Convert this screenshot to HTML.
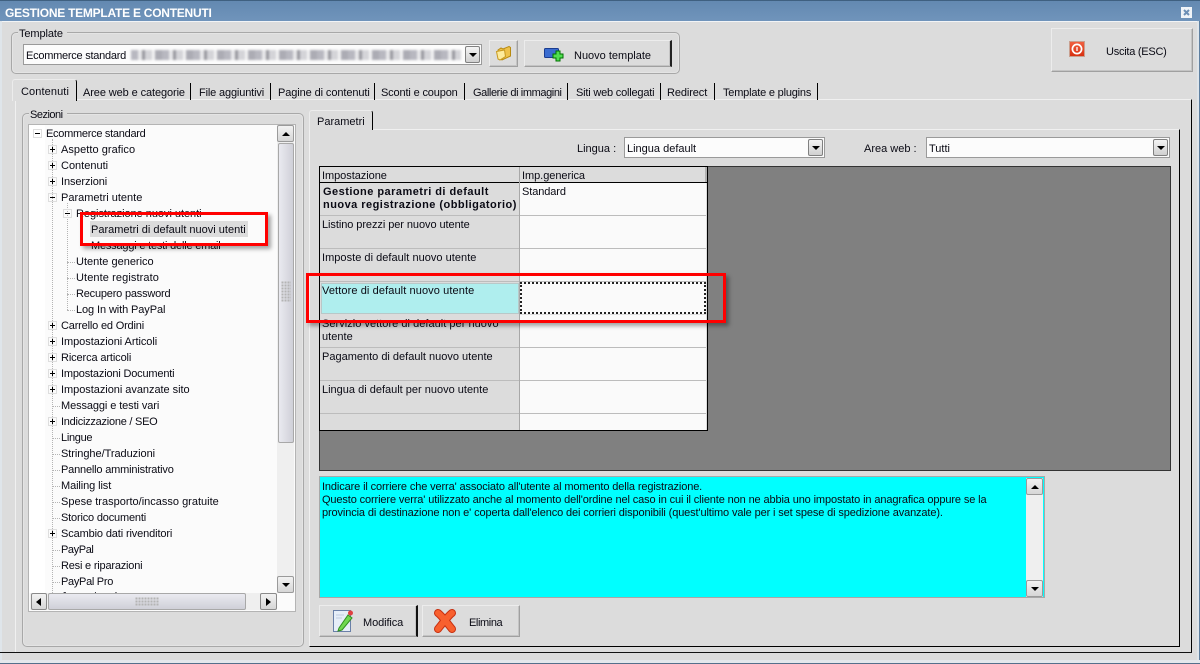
<!DOCTYPE html>
<html><head><meta charset="utf-8"><style>
html,body{margin:0;padding:0}
body{width:1200px;height:664px;overflow:hidden;position:relative;background:#dcdcdc;font:11px/14px "Liberation Sans",sans-serif;color:#0a0a14}
div,span.t,svg{position:absolute;box-sizing:border-box}
.t{white-space:nowrap;margin-top:1px}
.grp{border:1px solid #a8a8a8;border-radius:5px;box-shadow:inset 0 0 0 1px #e4e4e4}
.lab{background:#dcdcdc;padding:0 4px 0 1px}
.combo{background:#fcfcfc;border:1px solid #9a9a9a;height:21px}
.arr{right:1px;top:1px;width:15px;height:17px;background:linear-gradient(#f4f4f4,#d0d0d0);border:1px solid #808080;border-radius:2px}
.arr:after,.up:after,.dn:after{content:"";position:absolute;left:3px;top:6px;border:4px solid transparent;border-top:4px solid #000;border-bottom:0}
.up,.dn{width:17px;height:17px;background:linear-gradient(#f2f2f2,#d6d6d6);border:1px solid #9a9a9a;border-radius:2px}
.up:after{border-top:0;border-bottom:4px solid #000}
.up:after,.dn:after{left:4px}
.btn{background:#dcdcdc;border:1px solid;border-color:#ececec #a0a0a0 #a0a0a0 #ececec;box-shadow:inset -1px -1px 0 #c4c4c4}
.tsep{width:1px;background:#000;top:83px;height:17px}
.exp{width:9px;height:9px;left:0;top:0;border:1px solid #dedede}
.exp:before{content:"";position:absolute;left:1px;top:3px;width:5px;height:1px;background:#000}
.exp.p:after{content:"";position:absolute;left:3px;top:1px;width:1px;height:5px;background:#000}
.dv{border-left:1px dotted #b4b4b4}
.dh{border-top:1px dotted #b4b4b4;height:1px}
.rowl{left:320px;width:199px;background:#dcdcdc;border-bottom:1px solid #bcbcbc}
.rowr{left:520px;width:186px;background:#fafafa;border-bottom:1px solid #bcbcbc}
.red{border:3px solid #f00;box-shadow:3px 3px 4px rgba(0,0,0,.35)}
.grip{background-image:radial-gradient(#b4b4b4 50%,transparent 55%);background-size:3px 3px}
</style></head><body>
<!-- window frame -->
<div style="left:0;top:0;width:1200px;height:21px;background:linear-gradient(#6389b1,#7094bb);border-top:1px solid #3f6080"></div>
<div style="left:0;top:21px;width:1200px;height:1px;background:#f2f4f6"></div>
<div style="left:0;top:21px;width:2px;height:643px;background:#dfe5ea"></div>
<div style="left:1197px;top:21px;width:3px;height:643px;background:#dfe5ea;border-right:1px solid #5f7f9f"></div>
<div style="left:0;top:660px;width:1200px;height:4px;background:#e4e8ec;border-bottom:1px solid #54708c"></div>
<span class="t" style="left:5px;top:5px;color:#fff;font-weight:bold;font-size:12px;letter-spacing:-.25px">GESTIONE TEMPLATE E CONTENUTI</span>
<svg style="left:1181px;top:7px" width="11" height="11"><rect x="0" y="0" width="11" height="11" fill="#f0f4f8"/><path d="M3 3L8 8M8 3L3 8" stroke="#6d90b6" stroke-width="2"/></svg>

<!-- Template group -->
<div class="grp" style="left:11px;top:32px;width:669px;height:42px"></div>
<span class="t lab" style="left:18px;top:26px;letter-spacing:-.1px">Template</span>
<div class="combo" style="left:23px;top:44px;width:459px"><div class="arr"></div></div>
<span class="t" style="left:26px;top:48px;letter-spacing:-.25px">Ecommerce standard</span>
<div style="left:131px;top:50px;width:330px;height:10px;filter:blur(1px);background:repeating-linear-gradient(90deg,#b8b8c0 0 7px,#e8e8ea 7px 11px,#98989f 11px 14px,#d4d4d8 14px 21px,#f4f4f4 21px 24px,#acacb4 24px 31px)"></div>
<div class="btn" style="left:489px;top:40px;width:29px;height:27px"></div>
<svg style="left:495px;top:45px" width="17" height="17"><path d="M3 5L6 3L8 4L14 1.5L15.5 2.5L15.5 11L7 15L3 13Z" fill="#eec24a" stroke="#b88a10"/><path d="M1.5 6.5L9.5 5L10.5 11.5L5 15L3 14Z" fill="#fdeb9c" stroke="#c89a20"/></svg>
<div class="btn" style="left:524px;top:40px;width:148px;height:27px;border-right:2px solid #222"></div>
<svg style="left:544px;top:47px" width="20" height="17"><rect x="0.5" y="1.5" width="14" height="9" rx="1" fill="#3a6cd0" stroke="#1a3c90"/><path d="M9 7h3V4h4v3h3v4h-3v3h-4v-3H9z" fill="#50e050" stroke="#007000"/></svg>
<span class="t" style="left:574px;top:48px">Nuovo template</span>
<div class="btn" style="left:1051px;top:28px;width:142px;height:44px"></div>
<div style="left:1069px;top:41px;width:16px;height:16px;background:linear-gradient(#f06040,#d83010);border:1px solid #c8a090"></div>
<svg style="left:1069px;top:41px" width="16" height="16"><circle cx="8" cy="8" r="4.6" fill="none" stroke="#fff" stroke-width="1.7"/><path d="M8 6V10" stroke="#fff" stroke-width="1.3"/></svg>
<span class="t" style="left:1106px;top:44px;letter-spacing:-.25px">Uscita (ESC)</span>

<!-- Outer tabs -->
<div style="left:15px;top:99px;width:1177px;height:554px;border-top:1px solid #f0f0f0;border-left:1px solid #f0f0f0;border-right:1px solid #000;border-bottom:1px solid #000"></div>
<div style="left:0;top:652px;width:1192px;height:1px;background:#111"></div>
<div style="left:12px;top:79px;width:65px;height:22px;background:#dcdcdc;border:1px solid #ececec;border-bottom:0;border-radius:3px 3px 0 0;border-right:1px solid #000"></div>
<span class="t" style="left:21px;top:84px;letter-spacing:.1px">Contenuti</span>
<span class="t" style="left:83px;top:85px;letter-spacing:-.1px">Aree web e categorie</span>
<span class="t" style="left:199px;top:85px;letter-spacing:-.15px">File aggiuntivi</span>
<span class="t" style="left:278px;top:85px;letter-spacing:-.1px">Pagine di contenuti</span>
<span class="t" style="left:381px;top:85px;letter-spacing:-.15px">Sconti e coupon</span>
<span class="t" style="left:473px;top:85px;letter-spacing:-.4px">Gallerie di immagini</span>
<span class="t" style="left:576px;top:85px;letter-spacing:-.2px">Siti web collegati</span>
<span class="t" style="left:667px;top:85px;letter-spacing:-.1px">Redirect</span>
<span class="t" style="left:723px;top:85px;letter-spacing:-.2px">Template e plugins</span>
<div class="tsep" style="left:190px"></div><div class="tsep" style="left:270px"></div><div class="tsep" style="left:374px"></div><div class="tsep" style="left:464px"></div><div class="tsep" style="left:567px"></div><div class="tsep" style="left:660px"></div><div class="tsep" style="left:714px"></div><div class="tsep" style="left:817px"></div>

<!-- Sezioni -->
<div class="grp" style="left:22px;top:113px;width:282px;height:534px"></div>
<span class="t lab" style="left:29px;top:107px;letter-spacing:-.5px">Sezioni</span>
<div style="left:28px;top:124px;width:268px;height:488px;background:#fbfbfb;border:1px solid #b4b4b4;overflow:hidden"></div>
<div style="left:29px;top:125px;width:16px;height:468px;background:#fff"></div>
<div style="left:61px;top:592px;width:80px;height:2px;overflow:hidden"><span class="t" style="left:0;top:-3px;margin:0">Acquisti online</span></div>
<div style="left:277px;top:125px;width:17px;height:468px;background:#efefef"></div>
<div class="up" style="left:277px;top:125px"></div>
<div style="left:278px;top:143px;width:16px;height:300px;background:linear-gradient(90deg,#eaeaf0,#cfd0d8);border:1px solid #a8a8a8;border-radius:2px"></div>
<div class="grip" style="left:281px;top:281px;width:10px;height:21px"></div>
<div class="dn" style="left:277px;top:576px"></div>
<div style="left:30px;top:593px;width:246px;height:17px;background:#efefef"></div>
<div style="left:31px;top:593px;width:16px;height:17px;background:linear-gradient(#f2f2f2,#d6d6d6);border:1px solid #8a8a8a;border-radius:2px"></div>
<svg style="left:31px;top:593px" width="16" height="17"><path d="M5 9L10 5V13Z" fill="#000"/></svg>
<div style="left:48px;top:593px;width:198px;height:17px;background:linear-gradient(#eaeaf0,#cfd0d8);border:1px solid #a8a8a8;border-radius:2px"></div>
<div class="grip" style="left:135px;top:597px;width:24px;height:9px"></div>
<div style="left:260px;top:593px;width:17px;height:17px;background:linear-gradient(#f2f2f2,#d6d6d6);border:1px solid #8a8a8a;border-radius:2px"></div>
<svg style="left:260px;top:593px" width="16" height="17"><path d="M11 9L6 5V13Z" fill="#000"/></svg>

<!-- tree lines -->
<div class="dv" style="left:52px;top:139px;height:454px"></div>
<div class="dv" style="left:67px;top:203px;height:107px"></div>
<div class="dv" style="left:82px;top:219px;height:27px"></div>
<div class="dh" style="left:67px;top:262px;width:8px"></div><div class="dh" style="left:67px;top:278px;width:8px"></div><div class="dh" style="left:67px;top:294px;width:8px"></div><div class="dh" style="left:67px;top:310px;width:8px"></div>
<div class="dh" style="left:53px;top:406px;width:7px"></div><div class="dh" style="left:53px;top:438px;width:7px"></div><div class="dh" style="left:53px;top:454px;width:7px"></div><div class="dh" style="left:53px;top:470px;width:7px"></div><div class="dh" style="left:53px;top:486px;width:7px"></div><div class="dh" style="left:53px;top:502px;width:7px"></div><div class="dh" style="left:53px;top:518px;width:7px"></div><div class="dh" style="left:53px;top:550px;width:7px"></div><div class="dh" style="left:53px;top:566px;width:7px"></div><div class="dh" style="left:53px;top:582px;width:7px"></div>
<div class="exp" style="left:33px;top:129px"></div>
<div class="exp p" style="left:48px;top:145px"></div><div class="exp p" style="left:48px;top:161px"></div><div class="exp p" style="left:48px;top:177px"></div><div class="exp" style="left:48px;top:193px"></div><div class="exp" style="left:63px;top:209px"></div>
<div class="exp p" style="left:48px;top:321px"></div><div class="exp p" style="left:48px;top:337px"></div><div class="exp p" style="left:48px;top:353px"></div><div class="exp p" style="left:48px;top:369px"></div><div class="exp p" style="left:48px;top:385px"></div><div class="exp p" style="left:48px;top:417px"></div><div class="exp p" style="left:48px;top:529px"></div>

<span class="t" style="left:46px;top:126px;letter-spacing:-.28px">Ecommerce standard</span>
<span class="t" style="left:61px;top:142px;letter-spacing:.05px">Aspetto grafico</span>
<span class="t" style="left:61px;top:158px">Contenuti</span>
<span class="t" style="left:61px;top:174px;letter-spacing:-.1px">Inserzioni</span>
<span class="t" style="left:61px;top:190px">Parametri utente</span>
<span class="t" style="left:76px;top:206px;letter-spacing:-.04px">Registrazione nuovi utenti</span>
<div style="left:90px;top:221px;width:158px;height:16px;background:#dcdcdc"></div>
<span class="t" style="left:91px;top:222px">Parametri di default nuovi utenti</span>
<span class="t" style="left:91px;top:238px;letter-spacing:-.2px">Messaggi e testi delle email</span>
<span class="t" style="left:76px;top:254px">Utente generico</span>
<span class="t" style="left:76px;top:270px;letter-spacing:.1px">Utente registrato</span>
<span class="t" style="left:76px;top:286px;letter-spacing:-.2px">Recupero password</span>
<span class="t" style="left:76px;top:302px;letter-spacing:-.1px">Log In with PayPal</span>
<span class="t" style="left:61px;top:318px;letter-spacing:-.18px">Carrello ed Ordini</span>
<span class="t" style="left:61px;top:334px;letter-spacing:-.05px">Impostazioni Articoli</span>
<span class="t" style="left:61px;top:350px;letter-spacing:-.12px">Ricerca articoli</span>
<span class="t" style="left:61px;top:366px;letter-spacing:-.18px">Impostazioni Documenti</span>
<span class="t" style="left:61px;top:382px;letter-spacing:-.04px">Impostazioni avanzate sito</span>
<span class="t" style="left:61px;top:398px;letter-spacing:-.1px">Messaggi e testi vari</span>
<span class="t" style="left:61px;top:414px;letter-spacing:-.25px">Indicizzazione / SEO</span>
<span class="t" style="left:61px;top:430px;letter-spacing:-.3px">Lingue</span>
<span class="t" style="left:61px;top:446px;letter-spacing:-.05px">Stringhe/Traduzioni</span>
<span class="t" style="left:61px;top:462px;letter-spacing:-.18px">Pannello amministrativo</span>
<span class="t" style="left:61px;top:478px;letter-spacing:-.1px">Mailing list</span>
<span class="t" style="left:61px;top:494px">Spese trasporto/incasso gratuite</span>
<span class="t" style="left:61px;top:510px;letter-spacing:-.18px">Storico documenti</span>
<span class="t" style="left:61px;top:526px;letter-spacing:-.13px">Scambio dati rivenditori</span>
<span class="t" style="left:61px;top:542px;letter-spacing:-.4px">PayPal</span>
<span class="t" style="left:61px;top:558px;letter-spacing:-.2px">Resi e riparazioni</span>
<span class="t" style="left:61px;top:574px;letter-spacing:-.3px">PayPal Pro</span>

<!-- Inner panel -->
<div style="left:309px;top:129px;width:871px;height:518px;border-top:1px solid #f0f0f0;border-left:1px solid #f0f0f0;border-right:1px solid #000;border-bottom:1px solid #000"></div>
<div style="left:309px;top:110px;width:64px;height:20px;background:#dcdcdc;border:1px solid #ececec;border-bottom:0;border-right:1px solid #000;border-radius:3px 3px 0 0"></div>
<span class="t" style="left:317px;top:114px">Parametri</span>
<span class="t" style="left:577px;top:141px">Lingua :</span>
<div class="combo" style="left:624px;top:137px;width:201px"><div class="arr"></div></div>
<span class="t" style="left:627px;top:141px">Lingua default</span>
<span class="t" style="left:864px;top:141px">Area web :</span>
<div class="combo" style="left:926px;top:137px;width:244px"><div class="arr"></div></div>
<span class="t" style="left:929px;top:141px">Tutti</span>

<!-- Grid -->
<div style="left:319px;top:166px;width:852px;height:305px;background:#808080;border:1px solid #333"></div>
<div style="left:319px;top:166px;width:389px;height:265px;background:#dcdcdc;border:1px solid #000"></div>
<div style="left:320px;top:182px;width:387px;height:1px;background:#000"></div>
<div style="left:519px;top:167px;width:1px;height:263px;background:#a8a8a8"></div>
<div style="left:705px;top:167px;width:2px;height:15px;background:#b0b0b0"></div>
<span class="t" style="left:322px;top:168px;letter-spacing:-.05px">Impostazione</span>
<span class="t" style="left:522px;top:168px;letter-spacing:-.05px">Imp.generica</span>
<div class="rowl" style="top:183px;height:33px"></div><div class="rowr" style="top:183px;height:33px"></div>
<div class="rowl" style="top:216px;height:33px"></div><div class="rowr" style="top:216px;height:33px"></div>
<div class="rowl" style="top:249px;height:33px"></div><div class="rowr" style="top:249px;height:33px"></div>
<div style="left:321px;top:283px;width:198px;height:31px;background:#afeeee;border:1px solid #b8c8c8"></div>
<div style="left:520px;top:282px;width:186px;height:32px;background:#fafafa;border:2px dotted #222"></div>
<div class="rowl" style="top:315px;height:33px"></div><div class="rowr" style="top:315px;height:33px"></div>
<div class="rowl" style="top:348px;height:33px"></div><div class="rowr" style="top:348px;height:33px"></div>
<div class="rowl" style="top:381px;height:33px"></div><div class="rowr" style="top:381px;height:33px"></div>
<div class="rowl" style="top:414px;height:16px;border:0"></div><div class="rowr" style="top:414px;height:16px;border:0"></div>
<span class="t" style="left:323px;top:185px;font-weight:bold;line-height:13px;letter-spacing:.47px">Gestione parametri di default<br>nuova registrazione (obbligatorio)</span>
<span class="t" style="left:522px;top:184px;letter-spacing:-.1px">Standard</span>
<span class="t" style="left:322px;top:217px;letter-spacing:-.07px">Listino prezzi per nuovo utente</span>
<span class="t" style="left:322px;top:250px;letter-spacing:.03px">Imposte di default nuovo utente</span>
<span class="t" style="left:322px;top:283px;letter-spacing:.1px">Vettore di default nuovo utente</span>
<span class="t" style="left:322px;top:317px;line-height:13px;letter-spacing:.03px">Servizio vettore di default per nuovo<br>utente</span>
<span class="t" style="left:322px;top:349px">Pagamento di default nuovo utente</span>
<span class="t" style="left:322px;top:382px">Lingua di default per nuovo utente</span>

<!-- Red boxes -->
<div class="red" style="left:80px;top:212px;width:188px;height:34px"></div>
<div class="red" style="left:306px;top:273px;width:420px;height:50px"></div>

<!-- Help -->
<div style="left:319px;top:476px;width:726px;height:122px;background:#0ff;border:1px solid #a8a8a8"></div>
<span class="t" style="left:322px;top:480px;line-height:13px;letter-spacing:-.125px">Indicare il corriere che verra' associato all'utente al momento della registrazione.<br>Questo corriere verra' utilizzato anche al momento dell'ordine nel caso in cui il cliente non ne abbia uno impostato in anagrafica oppure se la<br>provincia di destinazione non e' coperta dall'elenco dei corrieri disponibili (quest'ultimo vale per i set spese di spedizione avanzate).</span>
<div style="left:1026px;top:478px;width:17px;height:119px;background:#efefef"></div>
<div class="up" style="left:1026px;top:478px"></div>
<div class="dn" style="left:1026px;top:580px"></div>

<!-- Bottom buttons -->
<div class="btn" style="left:319px;top:605px;width:99px;height:32px;border-right:2px solid #111"></div>
<svg style="left:332px;top:608px" width="22" height="25"><rect x="1.5" y="2.5" width="17" height="21" fill="#e6eef8" stroke="#6a80a8"/><path d="M4 7h8M4 10h6" stroke="#c0cce0"/><path d="M7 20L16 7L20 10L10 22L6 23Z" fill="#70d850" stroke="#309020"/><circle cx="18.5" cy="5" r="2.5" fill="#e04040"/></svg>
<span class="t" style="left:363px;top:615px;letter-spacing:-.1px">Modifica</span>
<div class="btn" style="left:422px;top:605px;width:98px;height:32px"></div>
<svg style="left:433px;top:608px" width="24" height="25"><path d="M5 5C9 8 15 16 19 21M19 5C15 8 9 16 5 21" fill="none" stroke="#c83010" stroke-width="8" stroke-linecap="round"/><path d="M5 5C9 8 15 16 19 21M19 5C15 8 9 16 5 21" fill="none" stroke="#f8602e" stroke-width="6" stroke-linecap="round"/></svg>
<span class="t" style="left:469px;top:615px;letter-spacing:-.4px">Elimina</span>
</body></html>
